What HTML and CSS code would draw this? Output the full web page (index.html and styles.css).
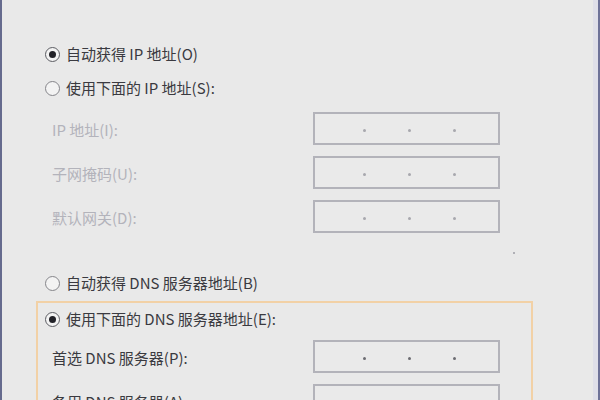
FILE: index.html
```html
<!DOCTYPE html>
<html lang="zh-CN">
<head>
<meta charset="utf-8">
<title>IP 设置</title>
<link rel="stylesheet" href="styles.css">
</head>
<body>
<div class="page">
  <div class="radio-row first">
    <span class="radio on"></span><span class="txt">自动获得 IP 地址(O)</span>
  </div>
  <div class="radio-row gap14">
    <span class="radio"></span><span class="txt">使用下面的 IP 地址(S):</span>
  </div>
  <div class="fields">
    <div class="field">
      <span class="label dim">IP 地址(I):</span>
      <span class="ipbox"><i class="dot"></i><i class="dot"></i><i class="dot"></i></span>
    </div>
    <div class="field">
      <span class="label dim">子网掩码(U):</span>
      <span class="ipbox"><i class="dot"></i><i class="dot"></i><i class="dot"></i></span>
    </div>
    <div class="field">
      <span class="label dim">默认网关(D):</span>
      <span class="ipbox"><i class="dot"></i><i class="dot"></i><i class="dot"></i></span>
    </div>
  </div>
  <div class="spacer"><i class="speck"></i></div>
  <div class="radio-row">
    <span class="radio"></span><span class="txt">自动获得 DNS 服务器地址(B)</span>
  </div>
  <div class="dnsbox">
    <div class="radio-row inbox">
      <span class="radio on"></span><span class="txt">使用下面的 DNS 服务器地址(E):</span>
    </div>
    <div class="fields inbox-fields">
      <div class="field">
        <span class="label">首选 DNS 服务器(P):</span>
        <span class="ipbox active"><i class="dot"></i><i class="dot"></i><i class="dot"></i></span>
      </div>
      <div class="field">
        <span class="label">备用 DNS 服务器(A):</span>
        <span class="ipbox active"><i class="dot"></i><i class="dot"></i><i class="dot"></i></span>
      </div>
    </div>
  </div>
</div>
</body>
</html>
```
FILE: styles.css
```css
html, body {
  margin: 0;
  padding: 0;
  background: #e9e9e9;
}

.page {
  width: 600px;
  height: 400px;
  box-sizing: border-box;
  overflow: hidden;
  background: #e9e9e9;
  border-left: 2px solid #666b8e;
  border-right: 2px solid #6e7298;
  box-shadow: inset -5px 0 0 #dfdfe9;
  padding: 44px 0 0 34px;
  font-family: "Noto Sans CJK SC", "Noto Sans", sans-serif;
  font-size: 15px;
  color: #3a3a40;
  display: flex;
  flex-direction: column;
}

.radio-row {
  display: flex;
  align-items: center;
  height: 20px;
  padding-left: 9px;
  flex: none;
}

.radio-row.gap14 {
  margin-top: 14px;
}

.radio {
  width: 13px;
  height: 13px;
  border-radius: 50%;
  border: 1px solid #85858a;
  background: #f3f3f3;
  margin-right: 6px;
  display: flex;
  align-items: center;
  justify-content: center;
  flex: none;
}

.radio.on {
  border-color: #5c5d63;
}

.radio.on::after {
  content: "";
  width: 7px;
  height: 7px;
  border-radius: 50%;
  background: #222228;
}

.txt {
  line-height: 20px;
  white-space: nowrap;
}

.fields {
  display: flex;
  flex-direction: column;
  gap: 11px;
  margin-top: 14px;
  flex: none;
}

.field {
  display: flex;
  align-items: center;
  height: 33px;
  padding-left: 16px;
}

.label {
  width: 261px;
  flex: none;
  white-space: nowrap;
  line-height: 20px;
  padding-top: 2px;
}

.label.dim {
  color: #b3b3bb;
}

.ipbox {
  width: 187px;
  height: 33px;
  box-sizing: border-box;
  border: 2px solid #b3b3ba;
  background: #eaeaea;
  display: flex;
  align-items: center;
  gap: 42px;
  padding: 3px 0 0 48px;
  flex: none;
}

.dot {
  width: 3px;
  height: 3px;
  border-radius: 50%;
  background: #a8a8ae;
  display: block;
}

.ipbox.active .dot {
  background: #6c6c72;
}

.spacer {
  height: 40px;
  flex: none;
}

.speck {
  display: block;
  width: 2px;
  height: 2px;
  background: #b0b0b6;
  margin: 19px 0 0 477px;
}

.dnsbox {
  margin-top: 8px;
  width: 497px;
  box-sizing: border-box;
  border: 2px solid #f2d1a6;
  border-bottom: none;
  padding-top: 6px;
  flex: none;
}

.radio-row.inbox {
  padding-left: 7px;
}

.inbox-fields {
  margin-top: 11px;
}

.inbox-fields .field {
  padding-left: 14px;
}
```
